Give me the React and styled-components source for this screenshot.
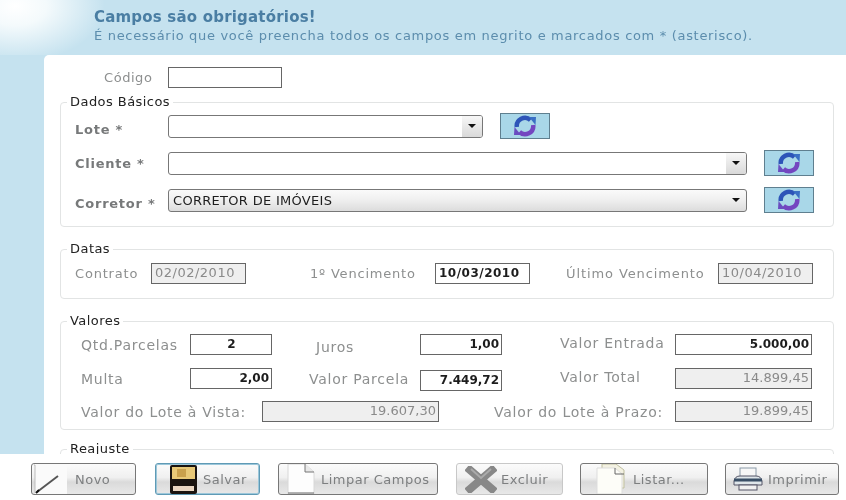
import React from "react";
import styled, { createGlobalStyle } from "styled-components";

const Global = createGlobalStyle`
  html, body { margin: 0; padding: 0; background: #c5e2ef; }
  * { box-sizing: border-box; }
`;

const Page = styled.div`
  width: 846px; height: 500px; overflow: hidden;
  display: flex; flex-direction: column;
  background: #c5e2ef;
  font-family: "DejaVu Sans", Verdana, sans-serif;
  filter: blur(0.35px);
`;
const Header = styled.header`
  height: 55px; flex: none; padding: 9px 0 0 94px;
  background: radial-gradient(ellipse 90px 56px at 15px 6px, #ffffff 0%, #f4fafc 35%, rgba(197,226,239,0) 100%);
`;
const Title = styled.div`
  font-size: 15px; line-height: 17px; font-weight: bold; color: #4a7ea3; letter-spacing: 0.2px;
`;
const Sub = styled.div`
  font-size: 13px; line-height: 17px; margin-top: 1px; color: #5c8dad; letter-spacing: 0.68px; white-space: nowrap;
`;
const Body = styled.main`
  flex: 1; min-height: 0; padding-left: 44px; overflow: hidden;
`;
const Panel = styled.div`
  background: #fff; border-top-left-radius: 5px; height: 100%; padding: 12px 12px 0 16px;
`;
const CodeRow = styled.div`
  display: flex; align-items: center; height: 21px; padding-left: 44px; gap: 16px;
`;
const FieldSet = styled.fieldset`
  margin: ${p => p.$mt}px 0 0 0; padding: 0; border: 1px solid #e2e4e4; border-radius: 4px;
  height: ${p => p.$h}px; min-width: 0;
`;
const Legend = styled.legend`
  margin-left: 6px; padding: 0 3px; font-size: 13px; line-height: 14px; color: #222; letter-spacing: 0.45px;
`;
const Label = styled.span`
  font-size: ${p => p.$size || 14}px; color: #8d8f8f; letter-spacing: ${p => p.$ls ?? 0.75}px; white-space: nowrap;
  padding-left: ${p => p.$pl || 0}px;
  position: relative; top: ${p => p.$dy || 0}px;
`;
const Input = styled.input`
  display: block; width: ${p => p.$w}px; height: 21px; margin: 0; padding: 0 2px 2px 3px;
  border: 1px solid #666; border-radius: 0; outline: none;
  font: ${p => (p.$dim ? "normal 13px" : "bold 12px")} "DejaVu Sans", sans-serif;
  letter-spacing: ${p => p.$ls || 0}px;
  text-align: ${p => p.$align || "right"};
  color: ${p => (p.$dim ? "#8a8a8a" : "#1d1d1d")};
  background: ${p => (p.$dim ? "#efefef" : "#fff")};
  position: relative; top: ${p => p.$dy || 0}px;
`;
const BasicRow = styled.div`
  display: grid; grid-template-columns: 76px ${p => p.$sel}px 50px;
  column-gap: 17px; align-items: center; height: 26px;
  margin-top: ${p => p.$mt}px; padding-left: 14px;
`;
const BasicLabel = styled(Label)`
  font-weight: bold; color: #77797a; font-size: 13px; letter-spacing: 0.75px; margin-right: -17px;
`;
const SelectBox = styled.div`
  height: 23px; width: ${p => p.$w}px; display: flex; align-items: center; justify-content: space-between;
  border: 1px solid #777; border-radius: 3px; padding-left: 4px;
  font-size: 13px; color: #1d1d1d; letter-spacing: 0.3px; overflow: hidden;
  background: ${p => (p.$filled ? "linear-gradient(#fafafa, #f0f0f0 45%, #dcdcdc)" : "#fff")};
`;
const Arrow = styled.span`
  flex: none; width: 20px; height: 100%; display: flex; align-items: center; justify-content: center;
  background: ${p => (p.$flat ? "none" : "linear-gradient(#f7f7f7, #d9d9d9)")};
  &::after { content: ""; border: 4px solid transparent; border-top: 4px solid #111; border-bottom: 0; }
`;
const RefreshButton = styled.button`
  width: 50px; height: 26px; margin: 0; padding: 0; display: flex; align-items: center; justify-content: center;
  border: 1px solid #5f7f8f; background: #a9d7e8;
`;
const DateRow = styled.div`
  display: grid; grid-template-columns: 76px 95px 189px 95px 188px 95px;
  align-items: center; height: 21px; padding-left: 14px; margin-top: 7px;
`;
const ValueRow = styled.div`
  display: grid; grid-template-columns: ${p => p.$cols};
  align-items: center; height: 21px; margin-top: ${p => p.$mt}px; padding-left: 20px;
`;
const Footer = styled.footer`
  height: 46px; flex: none; background: #fff; display: flex; align-items: flex-start; padding: 9px 0 0 31px;
`;
const ActionButton = styled.button`
  width: ${p => p.$w}px; height: 32px; margin-right: ${p => p.$mr}px; padding: 0 0 0 ${p => p.$pl}px;
  display: flex; align-items: center; gap: ${p => p.$gap}px; flex: none;
  border: 1px solid ${p => (p.$focus ? "#5f9ab5" : p.$light ? "#c8c8c8" : "#777")};
  ${p => p.$focus && "box-shadow: inset 0 0 0 1px #9cc7da;"}
  border-radius: 3px;
  background: linear-gradient(#fbfbfb 0%, #f0f0f0 45%, #dadada 60%, #e8e8e8 100%);
  font: 13px "DejaVu Sans", sans-serif; color: #7d7f80; letter-spacing: 0.5px; white-space: nowrap;
  overflow: hidden;
`;

const Refresh = () => (
  <svg width="28" height="22" viewBox="0 0 28 22">
    <path d="M5.8 12 A8.2 8.2 0 0 1 19.5 5" fill="none" stroke="#2d54b8" strokeWidth="4.5" />
    <path d="M18 2 L25 2 L24.5 10 Z" fill="#3a6fc4" />
    <path d="M22.2 10 A8.2 8.2 0 0 1 8.5 17" fill="none" stroke="#7446c0" strokeWidth="4.5" />
    <path d="M10 20 L3 20 L3.5 12 Z" fill="#6a4dc0" />
  </svg>
);
const PencilIcon = () => (
  <svg width="38" height="30" viewBox="0 0 38 30">
    <path d="M2 0H34V30H2Z" fill="#fafafa" />
    <path d="M1 1H2V29" stroke="#bbb" fill="none" />
    <path d="M4 28L25 12" stroke="#555" strokeWidth="2" />
    <path d="M3 29L6 26" stroke="#111" strokeWidth="2" />
  </svg>
);
const FloppyIcon = () => (
  <svg width="30" height="30" viewBox="0 0 30 30">
    <rect x="1" y="1" width="27" height="29" rx="2" fill="#1a1410" />
    <rect x="3" y="3" width="23" height="12" fill="#e8c877" />
    <rect x="8" y="5" width="9" height="8" fill="#c9a04c" />
    <rect x="4" y="22" width="21" height="5" fill="#e9d6c2" />
  </svg>
);
const PageIcon = () => (
  <svg width="28" height="30" viewBox="0 0 28 30">
    <path d="M1 0H18L27 8V30H1Z" fill="#fdfdfd" stroke="#d8d8d8" />
    <path d="M18 0V8H27" fill="#e8e8e8" stroke="#777" />
    <path d="M1 29H27" stroke="#666" />
  </svg>
);
const CrossIcon = () => (
  <svg width="32" height="27" viewBox="0 0 32 27">
    <path d="M5 4L16 13.5L27 4M5 23L16 13.5L27 23" stroke="#888" strokeWidth="8" fill="none" strokeLinecap="square" />
    <path d="M6 3L16 12L26 3" stroke="#aaa" strokeWidth="2" fill="none" />
  </svg>
);
const ListIcon = () => (
  <svg width="32" height="30" viewBox="0 0 32 30">
    <path d="M6 0H20L28 6V24H6Z" fill="#f3f1e2" stroke="#bfbf9f" />
    <path d="M1 4H19L26 10V30H1Z" fill="#fdfdf8" stroke="#ddd" />
    <path d="M19 4V10H28" fill="none" stroke="#666" />
  </svg>
);
const PrinterIcon = () => (
  <svg width="30" height="24" viewBox="0 0 30 24">
    <rect x="7" y="1" width="16" height="10" fill="#f7f7f7" stroke="#8a9aa8" />
    <path d="M1 14Q2 9 7 9H23Q28 9 29 14V18H1Z" fill="#dfe6ea" stroke="#556" />
    <path d="M1 13H29" stroke="#3a4f66" strokeWidth="3" />
    <rect x="6" y="18" width="18" height="5" fill="#f1f1f1" stroke="#556" />
  </svg>
);

export default function App() {
  return (
    <>
      <Global />
      <Page>
        <Header>
          <Title>Campos são obrigatórios!</Title>
          <Sub>É necessário que você preencha todos os campos em negrito e marcados com * (asterisco).</Sub>
        </Header>
        <Body>
          <Panel>
            <CodeRow>
              <Label $size={13} $ls={0.55}>Código</Label>
              <Input $w={114} readOnly value="" />
            </CodeRow>
            <FieldSet $mt={7} $h={132}>
              <Legend>Dados Básicos</Legend>
              <BasicRow $mt={4} $sel={315}>
                <BasicLabel $dy={3}>Lote *</BasicLabel>
                <SelectBox $w={315}><span /><Arrow /></SelectBox>
                <RefreshButton><Refresh /></RefreshButton>
              </BasicRow>
              <BasicRow $mt={11} $sel={579}>
                <BasicLabel>Cliente *</BasicLabel>
                <SelectBox $w={579}><span /><Arrow /></SelectBox>
                <RefreshButton><Refresh /></RefreshButton>
              </BasicRow>
              <BasicRow $mt={11} $sel={579}>
                <BasicLabel $dy={3}>Corretor *</BasicLabel>
                <SelectBox $w={579} $filled><span>CORRETOR DE IMÓVEIS</span><Arrow $flat /></SelectBox>
                <RefreshButton><Refresh /></RefreshButton>
              </BasicRow>
            </FieldSet>
            <FieldSet $mt={15} $h={57}>
              <Legend>Datas</Legend>
              <DateRow>
                <Label $size={13} $ls={0.8}>Contrato</Label>
                <Input $w={95} $dim $align="left" $ls={0.5} readOnly value="02/02/2010" />
                <Label $size={13} $ls={0.8} $pl={64}>1º Vencimento</Label>
                <Input $w={95} $align="left" $ls={0.5} readOnly value="10/03/2010" />
                <Label $size={13} $ls={0.9} $pl={36}>Último Vencimento</Label>
                <Input $w={95} $dim $align="left" $ls={0.5} readOnly value="10/04/2010" />
              </DateRow>
            </FieldSet>
            <FieldSet $mt={15} $h={116}>
              <Legend>Valores</Legend>
              <ValueRow $mt={6} $cols="109px 82px 148px 82px 173px 137px">
                <Label>Qtd.Parcelas</Label>
                <Input $w={82} $align="center" readOnly value="2" />
                <Label $pl={44} $dy={2}>Juros</Label>
                <Input $w={82} readOnly value="1,00" />
                <Label $pl={58} $dy={-2}>Valor Entrada</Label>
                <Input $w={137} readOnly value="5.000,00" />
              </ValueRow>
              <ValueRow $mt={13} $cols="109px 82px 148px 82px 173px 137px">
                <Label>Multa</Label>
                <Input $w={82} readOnly value="2,00" />
                <Label $pl={37}>Valor Parcela</Label>
                <Input $w={82} $dy={2} readOnly value="7.449,72" />
                <Label $pl={58} $dy={-2}>Valor Total</Label>
                <Input $w={137} $dim readOnly value="14.899,45" />
              </ValueRow>
              <ValueRow $mt={12} $cols="181px 177px 236px 137px">
                <Label>Valor do Lote à Vista:</Label>
                <Input $w={177} $dim readOnly value="19.607,30" />
                <Label $pl={55}>Valor do Lote à Prazo:</Label>
                <Input $w={137} $dim readOnly value="19.899,45" />
              </ValueRow>
            </FieldSet>
            <FieldSet $mt={12} $h={60}>
              <Legend>Reajuste</Legend>
            </FieldSet>
          </Panel>
        </Body>
        <Footer>
          <ActionButton $w={105} $mr={19} $pl={1} $gap={4}><PencilIcon />Novo</ActionButton>
          <ActionButton $w={105} $mr={18} $pl={13} $gap={4} $focus><FloppyIcon />Salvar</ActionButton>
          <ActionButton $w={160} $mr={18} $pl={8} $gap={6}><PageIcon />Limpar Campos</ActionButton>
          <ActionButton $w={107} $mr={17} $pl={8} $gap={4} $light><CrossIcon />Excluir</ActionButton>
          <ActionButton $w={128} $mr={17} $pl={15} $gap={5}><ListIcon />Listar...</ActionButton>
          <ActionButton $w={114} $mr={0} $pl={7} $gap={5}><PrinterIcon />Imprimir</ActionButton>
        </Footer>
      </Page>
    </>
  );
}
